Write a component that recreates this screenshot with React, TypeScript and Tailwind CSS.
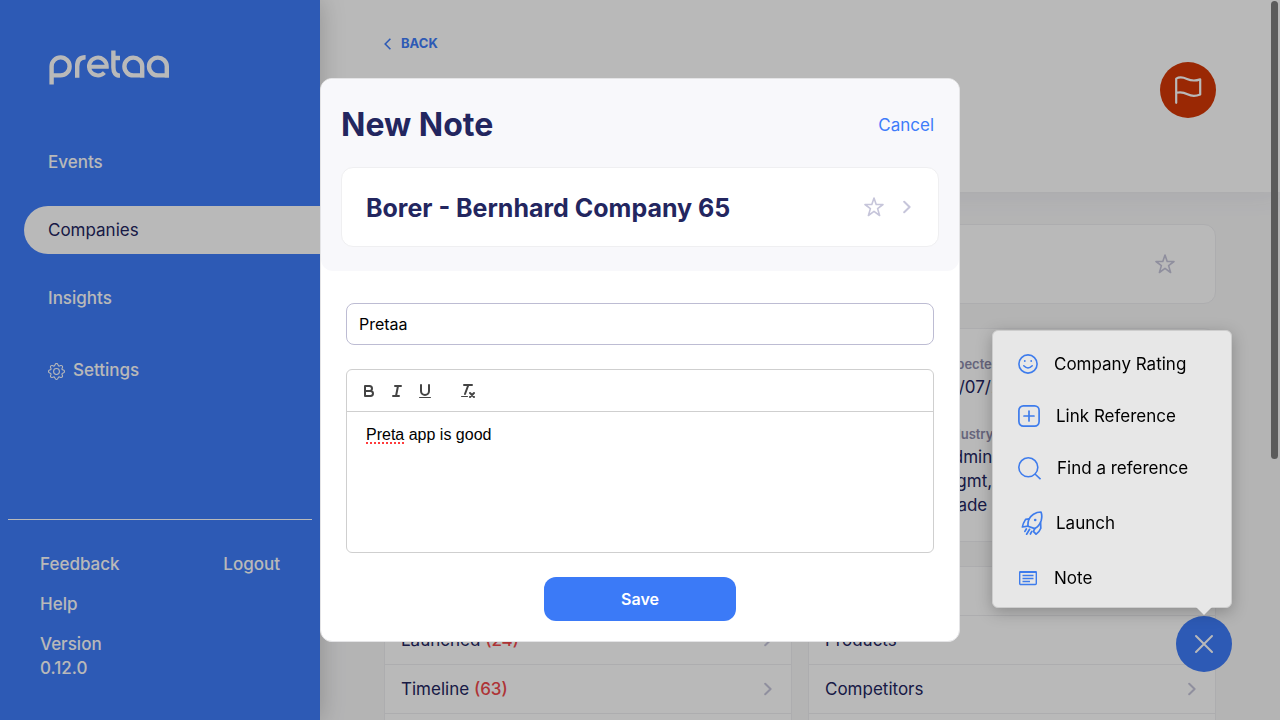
import type { ReactNode } from "react";
import { BsGear } from "react-icons/bs";

function Logo() {
  return (
    <svg width="122" height="36" viewBox="0 0 122 36" fill="none" stroke="#fff" strokeWidth="4.4" role="img" aria-label="pretaa">
      <path d="M3.6 34.6V16.3A9 9 0 1 1 12.6 25.4H4" />
      <path d="M29.2 27.8V16.3Q29.2 7.3 37.6 7.3" />
      <path d="M41 16.8H58.8A8.9 8.9 0 1 0 56.4 22.6" strokeWidth="4" />
      <path d="M65.4 0.5V17.5Q65.4 25.6 72 25.6M65.4 8H72" />
      <path d="M94.2 27.8V16.3A8.9 8.9 0 1 0 85.3 25.4H94" />
      <path d="M118.8 27.8V16.3A8.9 8.9 0 1 0 109.9 25.4H118.6" />
    </svg>
  );
}

function Star() {
  return (
    <svg width="20" height="20" viewBox="0 0 20 20" fill="none" stroke="currentColor" strokeWidth="1.6" strokeLinejoin="round" aria-hidden="true">
      <path d="M10 1l2.2 6.5H19l-5.4 4.1 2 6.9L10 14.4l-5.6 4.1 2-6.9L1 7.5h6.8z" />
    </svg>
  );
}

function Chevron() {
  return (
    <svg width="8" height="14" viewBox="0 0 8 14" fill="none" stroke="currentColor" strokeWidth="2" strokeLinecap="round" strokeLinejoin="round" aria-hidden="true">
      <path d="M1.2 1.8L6.6 7l-5.4 5.2" />
    </svg>
  );
}

function Sidebar() {
  return (
    <aside className="z-10 flex w-80 shrink-0 flex-col bg-[#3e7cfa] text-[17px] leading-6 font-medium text-white shadow-[0_0_24px_rgba(0,0,0,0.22)]">
      <div className="px-12 pt-[50px]">
        <Logo />
      </div>
      <nav className="mt-[52px] flex flex-col gap-5 pl-6">
        <a href="#events" className="flex h-12 items-center pl-6">Events</a>
        <a href="#companies" className="flex h-12 items-center rounded-l-full bg-white pl-6 font-normal text-[#23265f]">Companies</a>
        <a href="#insights" className="flex h-12 items-center pl-6">Insights</a>
        <a href="#settings" className="mt-1 flex h-12 items-center gap-2 pl-6">
          <BsGear className="mt-0.5 size-[17px]" />
          Settings
        </a>
      </nav>
      <div className="mx-2 mt-auto flex justify-between border-t border-white px-8 pt-8 pb-10">
        <div className="flex flex-col gap-4">
          <a href="#feedback">Feedback</a>
          <a href="#help">Help</a>
          <p>Version<br />0.12.0</p>
        </div>
        <div>
          <button type="button">Logout</button>
        </div>
      </div>
    </aside>
  );
}

function ListRow({ label, count }: { label?: string; count?: number }) {
  return (
    <li className="flex h-[49px] items-center justify-between border-b border-[#efeff1] px-4 text-[17px] leading-6">
      <span>
        {label} {count !== undefined && <span className="font-medium text-[#f0484b]">({count})</span>}
      </span>
      <span className="mr-[3px] text-[#c6c5da]"><Chevron /></span>
    </li>
  );
}

function CompanyPage() {
  return (
    <main className="min-w-0 flex-1 overflow-hidden bg-[#f8f8f9] text-[#23265f]">
      <header className="flex h-48 items-start justify-between bg-white px-16 pt-8 shadow-[0_4px_24px_rgba(60,60,110,0.07)]">
        <a href="#back" className="flex h-6 items-center gap-2.5 text-[13px] font-bold text-[#3e7cfa]">
          <svg width="7" height="12" viewBox="0 0 7 12" fill="none" stroke="currentColor" strokeWidth="1.6" aria-hidden="true">
            <path d="M6.4 0.8L1.2 6l5.2 5.2" />
          </svg>
          BACK
        </a>
        <button type="button" aria-label="Flag company" className="mt-[30px] flex size-14 items-center justify-center rounded-full bg-[#d43806] text-white">
          <svg width="28" height="28" viewBox="0 0 28 28" fill="none" stroke="currentColor" strokeWidth="2.2" strokeLinecap="round" strokeLinejoin="round">
            <path d="M2.2 26.8V2.6C5 1 9 1.2 13 3s8 2.2 13.2 .4v15C21 20.6 17 20 13.5 18.2S6 15.8 2.2 16.8" />
          </svg>
        </button>
      </header>
      <div className="flex flex-col gap-6 px-16 pt-8">
        <section className="flex h-20 items-center justify-end rounded-xl border border-[#efeff1] bg-white px-10 text-[#c6c5da]">
          <Star />
        </section>
        <section className="grid h-[214px] grid-cols-3 gap-4 rounded-xl border border-[#efeff1] bg-white px-6 pt-6">
          <dl className="col-start-3 text-[17px] leading-6">
            <dt className="text-[13px] leading-[22px] font-semibold text-[#8d8cab]">Expected</dt>
            <dd className="mb-6">10/07/2021</dd>
            <dt className="text-[13px] leading-[22px] font-semibold text-[#8d8cab]">Industry</dt>
            <dd>Admin,<br />Mgmt,<br />Trade</dd>
          </dl>
        </section>
        <div className="grid grid-cols-2 gap-4">
          <ul className="border border-[#efeff1] bg-white">
            <ListRow />
            <ListRow label="Launched" count={24} />
            <ListRow label="Timeline" count={63} />
            <ListRow />
          </ul>
          <ul className="border border-[#efeff1] bg-white">
            <ListRow />
            <ListRow label="Products" />
            <ListRow label="Competitors" />
            <ListRow />
          </ul>
        </div>
      </div>
    </main>
  );
}

function ToolButton({ label, children }: { label: string; children: ReactNode }) {
  return (
    <button type="button" aria-label={label} className="flex h-6 w-7 items-center justify-center">
      <svg width="18" height="18" viewBox="0 0 18 18" fill="none" stroke="#444" strokeWidth="2" strokeLinecap="round" strokeLinejoin="round">
        {children}
      </svg>
    </button>
  );
}

function NoteDialog() {
  return (
    <div className="fixed inset-0 z-20 flex items-center justify-center bg-black/[0.275]">
      <form role="dialog" aria-labelledby="dialog-title" className="w-[640px] max-w-full rounded-xl border border-[#e4e4e6] bg-white">
        <div className="rounded-xl bg-[#f8f8fb] px-5 pt-5 pb-6">
          <div className="flex h-[52px] items-center justify-between">
            <h1 id="dialog-title" className="text-[32px] leading-[52px] font-bold text-[#23265f]">New Note</h1>
            <button type="button" className="mr-[5px] text-[17px] leading-6 text-[#3e7cfa]">Cancel</button>
          </div>
          <div className="mt-4 flex h-20 items-center rounded-xl border border-[#efeff1] bg-white pr-[27px] pl-6">
            <h2 className="flex-1 pt-0.5 text-[25px] leading-8 font-bold text-[#23265f]">Borer - Bernhard Company 65</h2>
            <button type="button" aria-label="Favorite" className="text-[#c6c5da]"><Star /></button>
            <button type="button" aria-label="Open company" className="ml-[19px] text-[#c6c5da]"><Chevron /></button>
          </div>
        </div>
        <div className="flex flex-col px-[25px] pt-8 pb-5">
          <input aria-label="Subject" defaultValue="Pretaa" className="h-[42px] rounded-lg border border-[#bdbcd3] px-3 text-base text-black outline-none" />
          <div className="mt-6 rounded-md border border-[#cfcfcf]">
            <div className="flex h-[42px] items-center border-b border-[#cfcfcf] px-2">
              <ToolButton label="Bold">
                <path d="M5 4H9.5A2.5 2.5 0 0 1 9.5 9H5zM5 9H10.5A2.5 2.5 0 0 1 10.5 14H5z" />
              </ToolButton>
              <ToolButton label="Italic">
                <path d="M7 4H13M5 14H11M8 14L10 4" />
              </ToolButton>
              <ToolButton label="Underline">
                <path d="M5 3V9a4 4 0 0 0 8 0V3" />
                <rect x="3" y="15" width="12" height="1" rx="0.5" fill="#444" stroke="none" />
              </ToolButton>
              <div className="ml-[15px] flex">
                <ToolButton label="Clear formatting">
                  <path d="M5 3H13M6 12L9.35 3" />
                  <path d="M11 11L15 15M15 11L11 15" />
                  <rect x="2" y="14" width="7" height="1" rx="0.5" fill="#444" stroke="none" />
                </ToolButton>
              </div>
            </div>
            <div contentEditable suppressContentEditableWarning role="textbox" aria-label="Note" spellCheck={false} className="h-[140px] px-[19px] py-3 font-['Liberation_Sans',Arial,sans-serif] text-base leading-[22px] text-black outline-none">
              <span className="underline decoration-[#ff3b3b] decoration-dotted decoration-2 underline-offset-2 [text-decoration-skip-ink:none]">Preta</span> app is good
            </div>
          </div>
          <button type="submit" className="mt-6 h-11 w-48 self-center rounded-xl bg-[#3b7af7] text-base font-semibold text-white">Save</button>
        </div>
      </form>
    </div>
  );
}

function MenuItem({ label, icon, tall }: { label: string; icon: ReactNode; tall?: boolean }) {
  return (
    <li>
      <button type="button" className={tall ? "flex h-[58px] w-full items-center gap-4 px-[25px]" : "flex h-[52px] w-full items-center gap-4 px-[25px]"}>
        <span className="text-[#3e7cec]">{icon}</span>
        {label}
      </button>
    </li>
  );
}

function ActionMenu() {
  return (
    <ul className="fixed right-12 bottom-28 z-30 w-60 rounded-md border border-[#cdcdcd] bg-[#e7e7e7] pt-[7px] pb-[3px] text-[17px] leading-6 text-black shadow-[0_4px_16px_rgba(0,0,0,0.25)]">
      <MenuItem
        label="Company Rating"
        icon={
          <svg width="20" height="20" viewBox="0 0 20 20" fill="none" stroke="currentColor" strokeWidth="1.6" strokeLinecap="round">
            <circle cx="10" cy="10" r="9.1" />
            <path d="M5.8 11.8Q10 16.2 14.2 11.8" />
            <circle cx="6.8" cy="7" r="0.9" fill="currentColor" stroke="none" />
            <circle cx="13.2" cy="7" r="0.9" fill="currentColor" stroke="none" />
          </svg>
        }
      />
      <MenuItem
        label="Link Reference"
        icon={
          <svg width="22" height="22" viewBox="0 0 22 22" fill="none" stroke="currentColor" strokeWidth="1.7" strokeLinecap="round">
            <rect x="0.9" y="0.9" width="20.2" height="20.2" rx="4.5" />
            <path d="M11 6v10M6 11h10" />
          </svg>
        }
      />
      <MenuItem
        label="Find a reference"
        icon={
          <svg width="23" height="23" viewBox="0 0 23 23" fill="none" stroke="currentColor" strokeWidth="1.6">
            <circle cx="10.3" cy="10.3" r="9.5" />
            <path d="M17 17l5.5 5.2" />
          </svg>
        }
      />
      <MenuItem
        tall
        label="Launch"
        icon={
          <svg width="22" height="24" viewBox="0 0 22 24" className="-mr-[3px] ml-[3px]" fill="none" stroke="currentColor" strokeWidth="1.7" strokeLinecap="round" strokeLinejoin="round">
            <path d="M20 1C14.5 1 9.5 4.5 7.8 8.5C7 10.8 6.8 13 7 15.2L13.8 17.6C17 15.8 19.3 12.5 20.2 9.5C21 6.5 21 3.5 20 1z" />
            <path d="M8.2 7.8L4.6 8.4C3 10.8 1.7 13.8 1.4 16L7 15.2" />
            <path d="M19.6 11.8L19.8 17.2C18.8 19.8 17 22 15 23.2L12.4 20.4L13.8 17.6" />
            <circle cx="14.2" cy="9" r="1.3" fill="currentColor" stroke="none" />
            <path d="M5.3 18l-1.4 2.4M8.6 18.3l-3 5M10.8 20.4l-1.4 2.6" />
          </svg>
        }
      />
      <MenuItem
        label="Note"
        icon={
          <svg width="20" height="16" viewBox="0 0 20 16" fill="none" stroke="currentColor" strokeWidth="1.4">
            <rect x="1.7" y="1.7" width="16.6" height="12.8" rx="1" />
            <path d="M1.5 2H18.5" strokeWidth="2" />
            <path d="M4.5 5.5h11M4.5 8.5h11M4.5 11.5h7.5" />
          </svg>
        }
      />
      <li aria-hidden="true" className="absolute top-full right-[19px] h-2 w-4">
        <svg width="16" height="8" viewBox="0 0 16 8" fill="#e7e7e7"><path d="M0 0h16L8 8z" /></svg>
      </li>
    </ul>
  );
}

export default function App() {
  return (
    <div className="relative flex h-screen overflow-hidden font-['Inter',sans-serif]">
      <Sidebar />
      <CompanyPage />
      <button type="button" aria-label="Close actions" className="fixed right-12 bottom-12 z-10 flex size-14 items-center justify-center rounded-full bg-[#3e7cfa] text-white">
        <svg width="20" height="20" viewBox="0 0 20 20" fill="none" stroke="currentColor" strokeWidth="2" strokeLinecap="round">
          <path d="M2 2l16 16M18 2L2 18" />
        </svg>
      </button>
      <NoteDialog />
      <ActionMenu />
      <div aria-hidden="true" className="fixed top-px right-0.5 z-30 h-[458px] w-[7px] rounded-full bg-[#5b5b5b]" />
    </div>
  );
}
